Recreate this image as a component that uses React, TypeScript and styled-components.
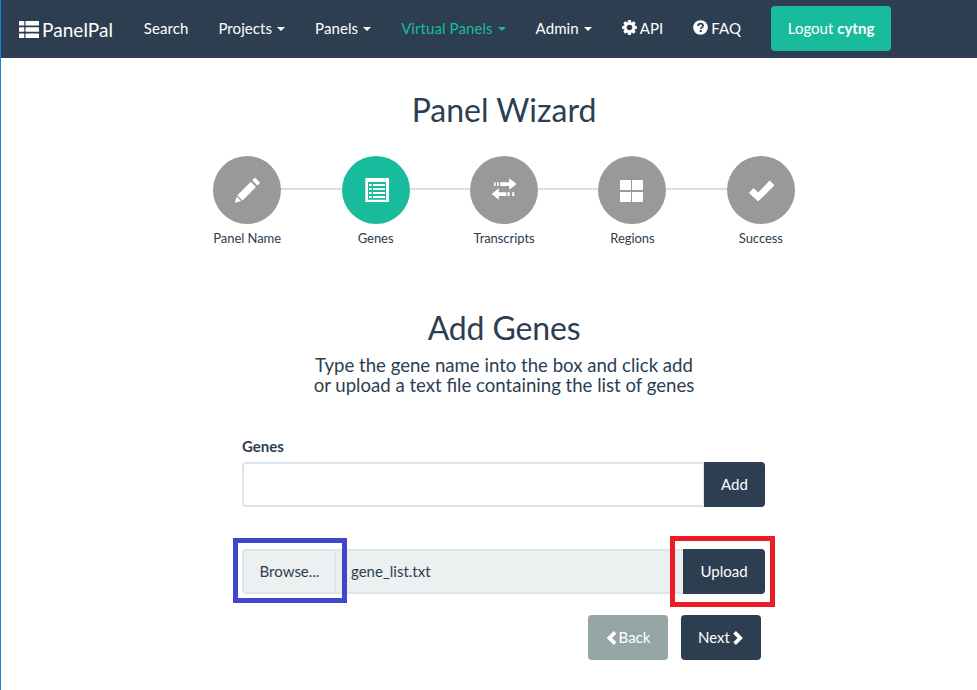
import React from "react";
import styled, { createGlobalStyle, css } from "styled-components";

const navy = "#2c3e50";
const teal = "#18bc9c";

const GlobalStyle = createGlobalStyle`
  *, *::before, *::after { box-sizing: border-box; }
  body {
    margin: 0;
    background: #fff;
    color: ${navy};
    font-family: Lato, "Open Sans", sans-serif;
    font-size: 15px;
    line-height: 21px;
    overflow: hidden;
  }
`;

const Page = styled.div`
  height: 690px;
  border-left: 1px solid #1883d7;
`;

const Navbar = styled.nav`
  display: flex;
  align-items: center;
  height: 58px;
  padding: 0 0 2px 18px;
  background: ${navy};
  color: #fff;
`;

const Brand = styled.a`
  display: flex;
  align-items: center;
  gap: 2px;
  margin-right: 15.7px;
  padding-top: 3px;
  font-size: 19px;
  letter-spacing: 0.06px;
`;

const NavItem = styled.a<{ $active?: boolean }>`
  display: flex;
  align-items: center;
  padding: 0 15px;
  white-space: nowrap;
  letter-spacing: 0.08px;
  color: ${(p) => (p.$active ? teal : "#fff")};
`;

const Caret = styled.span`
  margin: 2px 0 0 5px;
  border-top: 4px solid currentColor;
  border-left: 4px solid transparent;
  border-right: 4px solid transparent;
`;

const NavIcon = styled.svg`
  margin: -2px 3px 0 0;
`;

const Button = styled.button<{ $tone?: string; $width: number; $attached?: boolean }>`
  display: flex;
  flex: none;
  align-items: center;
  justify-content: center;
  width: ${(p) => p.$width}px;
  height: 45px;
  padding: 0;
  border: 0;
  border-radius: ${(p) => (p.$attached ? "0 4px 4px 0" : "4px")};
  background: ${(p) => p.$tone ?? navy};
  color: #fff;
  font: inherit;
  white-space: pre;
`;

const LogoutSlot = styled.div`
  margin-left: 15px;
`;

const Main = styled.main`
  display: flex;
  flex-direction: column;
  align-items: center;
  padding: 34px 0 0 30px;
`;

const Title = styled.h2`
  margin: 0;
  font-size: 32px;
  font-weight: 400;
  line-height: 36px;
`;

const Steps = styled.ol`
  display: flex;
  width: 642px;
  margin: 28px 0 0;
  padding: 0;
  list-style: none;
`;

const Step = styled.li`
  position: relative;
  display: flex;
  flex: 1;
  flex-direction: column;
  align-items: center;
  gap: 4px;
  font-size: 13px;
  letter-spacing: -0.06px;

  &:not(:last-child)::before {
    content: "";
    position: absolute;
    top: 32px;
    left: 50%;
    width: 100%;
    height: 2px;
    background: #ddd;
  }
`;

const StepCircle = styled.svg<{ $active?: boolean }>`
  position: relative;
  z-index: 1;
  width: 68px;
  height: 68px;
  border-radius: 50%;
  background: ${(p) => (p.$active ? teal : "#999")};
`;

const SectionTitle = styled(Title)`
  margin-top: 61px;
  letter-spacing: -0.15px;
`;

const Lead = styled.div`
  display: flex;
  flex-direction: column;
  align-items: center;
  margin-top: 9px;
  font-size: 18.6px;
  line-height: 20px;
`;

const Form = styled.form`
  width: 523px;
  margin: 41px 1px 0 0;
`;

const Label = styled.label`
  display: block;
  margin-bottom: 5px;
  font-weight: 700;
`;

const InputGroup = styled.div`
  display: flex;
  height: 45px;
`;

const field = css`
  flex: 1;
  min-width: 0;
  border: 2px solid #dce4ec;
  border-radius: 4px 0 0 4px;
  border-right-width: 1px;
`;

const TextInput = styled.input`
  ${field}
  padding: 10px 15px;
  background: #fff;
  color: inherit;
  font: inherit;
`;

const FileGroup = styled(InputGroup)`
  margin-top: 42px;
`;

const FileField = styled.div`
  ${field}
  display: flex;
  align-items: center;
  border-right: 0;
  background: #ecf0f1;
`;

const Browse = styled.span`
  display: flex;
  align-items: center;
  justify-content: center;
  width: 92px;
  height: 100%;
  padding-left: 1px;
  border-right: 2px solid #dce4ec;
`;

const FileName = styled.span`
  padding-left: 15px;
`;

const Highlighted = styled.div<{ $color: string; $inset: string }>`
  position: relative;
  display: flex;
  height: 100%;

  &::after {
    content: "";
    position: absolute;
    inset: ${(p) => p.$inset};
    border: 5px solid ${(p) => p.$color};
    pointer-events: none;
  }
`;

const Actions = styled.div`
  display: flex;
  justify-content: flex-end;
  gap: 13px;
  margin-top: 21px;
  padding-right: 4px;
`;

const BrandIcon = () => (
  <svg width="21" height="17" viewBox="0 0 21 17" fill="#fff">
    {[0, 6.3, 12.6].map((y) => (
      <React.Fragment key={y}>
        <rect x="0" y={y} width="5.3" height="4.4" rx=".5" />
        <rect x="6.5" y={y} width="13.5" height="4.4" rx=".5" />
      </React.Fragment>
    ))}
  </svg>
);

const GearIcon = () => (
  <NavIcon width="15" height="15" viewBox="-7.5 -7.5 15 15">
    <circle r="4.2" fill="none" stroke="#fff" strokeWidth="2.8" />
    {[0, 45, 90, 135, 180, 225, 270, 315].map((a) => (
      <path key={a} d="M-1.9-5L-1.3-7.4H1.3L1.9-5Z" fill="#fff" transform={`rotate(${a})`} />
    ))}
  </NavIcon>
);

const HelpIcon = () => (
  <NavIcon width="15" height="15" viewBox="0 0 15 15">
    <circle cx="7.5" cy="7.5" r="7.3" fill="#fff" />
    <path d="M5 6C5 2.8 10 2.8 10 5.7C10 7.3 7.7 7.4 7.7 9" fill="none" stroke={navy} strokeWidth="1.8" />
    <rect x="6.7" y="10" width="2" height="2" fill={navy} />
  </NavIcon>
);

const ChevronSvg = styled.svg<{ $right: boolean }>`
  margin: ${(p) => (p.$right ? "0 0 0 3px" : "0 2px 0 0")};
`;

const Chevron = ({ right = false }: { right?: boolean }) => (
  <ChevronSvg $right={right} width="11" height="14" viewBox="0 0 11 14">
    <path
      d={right ? "M1.6 1.4L7.2 7L1.6 12.6" : "M9 1.4L3.4 7L9 12.6"}
      fill="none"
      stroke="#fff"
      strokeWidth="3.8"
    />
  </ChevronSvg>
);

const PencilGlyph = () => (
  <g fill="#fff">
    <path d="M24.3 39.2L37.8 25.7L43 30.9L29.5 44.4Z" />
    <path d="M39.2 24.3L41.3 22.2Q42 21.5 42.8 22.2L46.5 25.9Q47.2 26.7 46.5 27.4L44.4 29.5Z" />
    <path d="M23.6 40.4L28.2 45L22 46.8Z" />
  </g>
);

const ListGlyph = () => (
  <g fill="#fff">
    <path fillRule="evenodd" d="M23.3 22H47V46H23.3ZM26 26V43.7H44V26Z" />
    {[28, 32, 36, 40].map((y) => (
      <React.Fragment key={y}>
        <rect x="27" y={y} width="2.7" height="2" />
        <rect x="31" y={y} width="12" height="2" />
      </React.Fragment>
    ))}
  </g>
);

const TransferGlyph = () => (
  <g fill="#fff">
    <path d="M30.2 26.2H39.2V22.3L46.6 28L39.2 33.7V30H30.2Z" />
    <path d="M24 26.2H25.6V30H24ZM27 26.2H28.7V30H27Z" />
    <path d="M36.3 36.2H28.8V32.3L21.7 38L28.8 43.7V40H36.3Z" />
    <path d="M37.5 36.2H39.7V40H37.5ZM42.2 36.2H44.3V40H42.2Z" />
  </g>
);

const GridGlyph = () => (
  <g fill="#fff">
    {[22, 34].map((x) =>
      [24, 36].map((y) => <rect key={`${x}-${y}`} x={x} y={y} width="11" height="10" rx=".7" />)
    )}
  </g>
);

const CheckGlyph = () => (
  <path fill="#fff" d="M22.5 36.2L26 32.7Q26.7 32 27.4 32.7L31.2 36.5L42 25.2Q42.7 24.5 43.4 25.2L46.8 28.6Q47.5 29.3 46.8 30L31.8 44.8Q31.1 45.5 30.4 44.8L22.5 37.4Q21.9 36.8 22.5 36.2Z" />
);

const steps = [
  { label: "Panel Name", Glyph: PencilGlyph },
  { label: "Genes", Glyph: ListGlyph, active: true },
  { label: "Transcripts", Glyph: TransferGlyph },
  { label: "Regions", Glyph: GridGlyph },
  { label: "Success", Glyph: CheckGlyph },
];

export default function App() {
  return (
    <>
      <GlobalStyle />
      <Page>
        <Navbar>
          <Brand><BrandIcon />PanelPal</Brand>
          <NavItem>Search</NavItem>
          <NavItem>Projects<Caret /></NavItem>
          <NavItem>Panels<Caret /></NavItem>
          <NavItem $active>Virtual Panels<Caret /></NavItem>
          <NavItem>Admin<Caret /></NavItem>
          <NavItem><GearIcon />API</NavItem>
          <NavItem><HelpIcon />FAQ</NavItem>
          <LogoutSlot>
            <Button $tone={teal} $width={120}>Logout <b>cytng</b></Button>
          </LogoutSlot>
        </Navbar>
        <Main>
          <Title>Panel Wizard</Title>
          <Steps>
            {steps.map(({ label, Glyph, active }) => (
              <Step key={label}>
                <StepCircle viewBox="0 0 68 68" $active={active}><Glyph /></StepCircle>
                {label}
              </Step>
            ))}
          </Steps>
          <SectionTitle>Add Genes</SectionTitle>
          <Lead>
            <span>Type the gene name into the box and click add</span>
            <span>or upload a text file containing the list of genes</span>
          </Lead>
          <Form onSubmit={(e) => e.preventDefault()}>
            <Label htmlFor="genes">Genes</Label>
            <InputGroup>
              <TextInput id="genes" />
              <Button type="button" $width={61} $attached>Add</Button>
            </InputGroup>
            <FileGroup>
              <FileField>
                <Highlighted $color="#3f48cc" $inset="-13px -11px -11px -11px">
                  <Browse>Browse...</Browse>
                </Highlighted>
                <FileName>gene_list.txt</FileName>
              </FileField>
              <Highlighted $color="#ed1c24" $inset="-13px -10px -13px -13px">
                <Button type="button" $width={82} $attached>Upload</Button>
              </Highlighted>
            </FileGroup>
            <Actions>
              <Button type="button" $tone="#95a5a6" $width={80}><Chevron />Back</Button>
              <Button type="button" $width={80}>Next<Chevron right /></Button>
            </Actions>
          </Form>
        </Main>
      </Page>
    </>
  );
}
